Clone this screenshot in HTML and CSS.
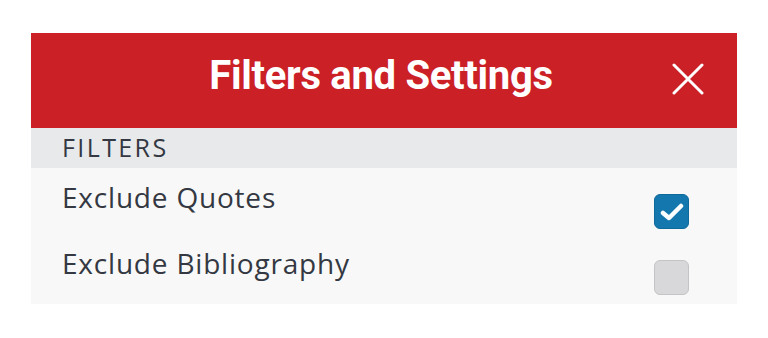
FILE: index.html
```html
<!DOCTYPE html>
<html lang="en">
<head>
    <meta charset="UTF-8">
    <title>Filters and Settings</title>
    <link rel="stylesheet" href="styles.css">
</head>
<body>
    <div class="panel">
        <div class="panel-header">
            <h2>Filters and Settings</h2>
            <span class="close">
                <svg width="32" height="32" viewBox="0 0 32 32">
                    <path d="M2 2 L30 30 M30 2 L2 30" stroke="#fff" stroke-width="3" stroke-linecap="round"/>
                </svg>
            </span>
        </div>
        <div class="section-title">FILTERS</div>
        <div class="options">
            <label class="option">
                <span class="label">Exclude Quotes</span>
                <span class="box checked">
                    <svg width="24" height="20" viewBox="0 0 24 20">
                        <path d="M3 11 L9 16 L21 4" fill="none" stroke="#fff" stroke-width="4.5" stroke-linecap="round" stroke-linejoin="round"/>
                    </svg>
                </span>
            </label>
            <label class="option">
                <span class="label">Exclude Bibliography</span>
                <span class="box"></span>
            </label>
        </div>
    </div>
</body>
</html>
```

FILE: styles.css
```css
body {
    margin: 0;
    padding: 0;
    background: #fff;
    font-family: Roboto, "Liberation Sans", Arial, sans-serif;
}
.panel {
    width: 706px;
    margin: 33px 0 0 31px;
    background: #f8f8f8;
}
.panel-header {
    position: relative;
    height: 95px;
    background: #cc2027;
    display: flex;
    align-items: center;
    justify-content: center;
}
.panel-header h2 {
    margin: 0 6px 10px 0;
    color: #fff;
    font-size: 40px;
    font-weight: bold;
    letter-spacing: -0.3px;
}
.close {
    position: absolute;
    right: 33px;
    top: 30px;
    display: flex;
}
.section-title {
    background: #e8e9eb;
    height: 40px;
    line-height: 38px;
    padding-left: 31px;
    color: #343842;
    font-family: "Open Sans", Roboto, sans-serif;
    font-size: 25px;
    font-weight: 500;
    letter-spacing: 2.4px;
}
.options {
    padding: 10px 48px 0 31px;
}
.option {
    display: flex;
    justify-content: space-between;
    align-items: flex-start;
    height: 66px;
}
.option:last-child {
    height: 60px;
}
.label {
    color: #343842;
    font-family: "Open Sans", Roboto, sans-serif;
    font-size: 28px;
    font-weight: 500;
    letter-spacing: 0.8px;
}
.box {
    width: 33px;
    height: 33px;
    margin-top: 16px;
    border-radius: 6px;
    background: #d8d8da;
    border: 1px solid #c4c4c6;
    display: flex;
    align-items: center;
    justify-content: center;
}
.box.checked {
    background: #1477ad;
    border-color: #0f6a9c;
}
```
